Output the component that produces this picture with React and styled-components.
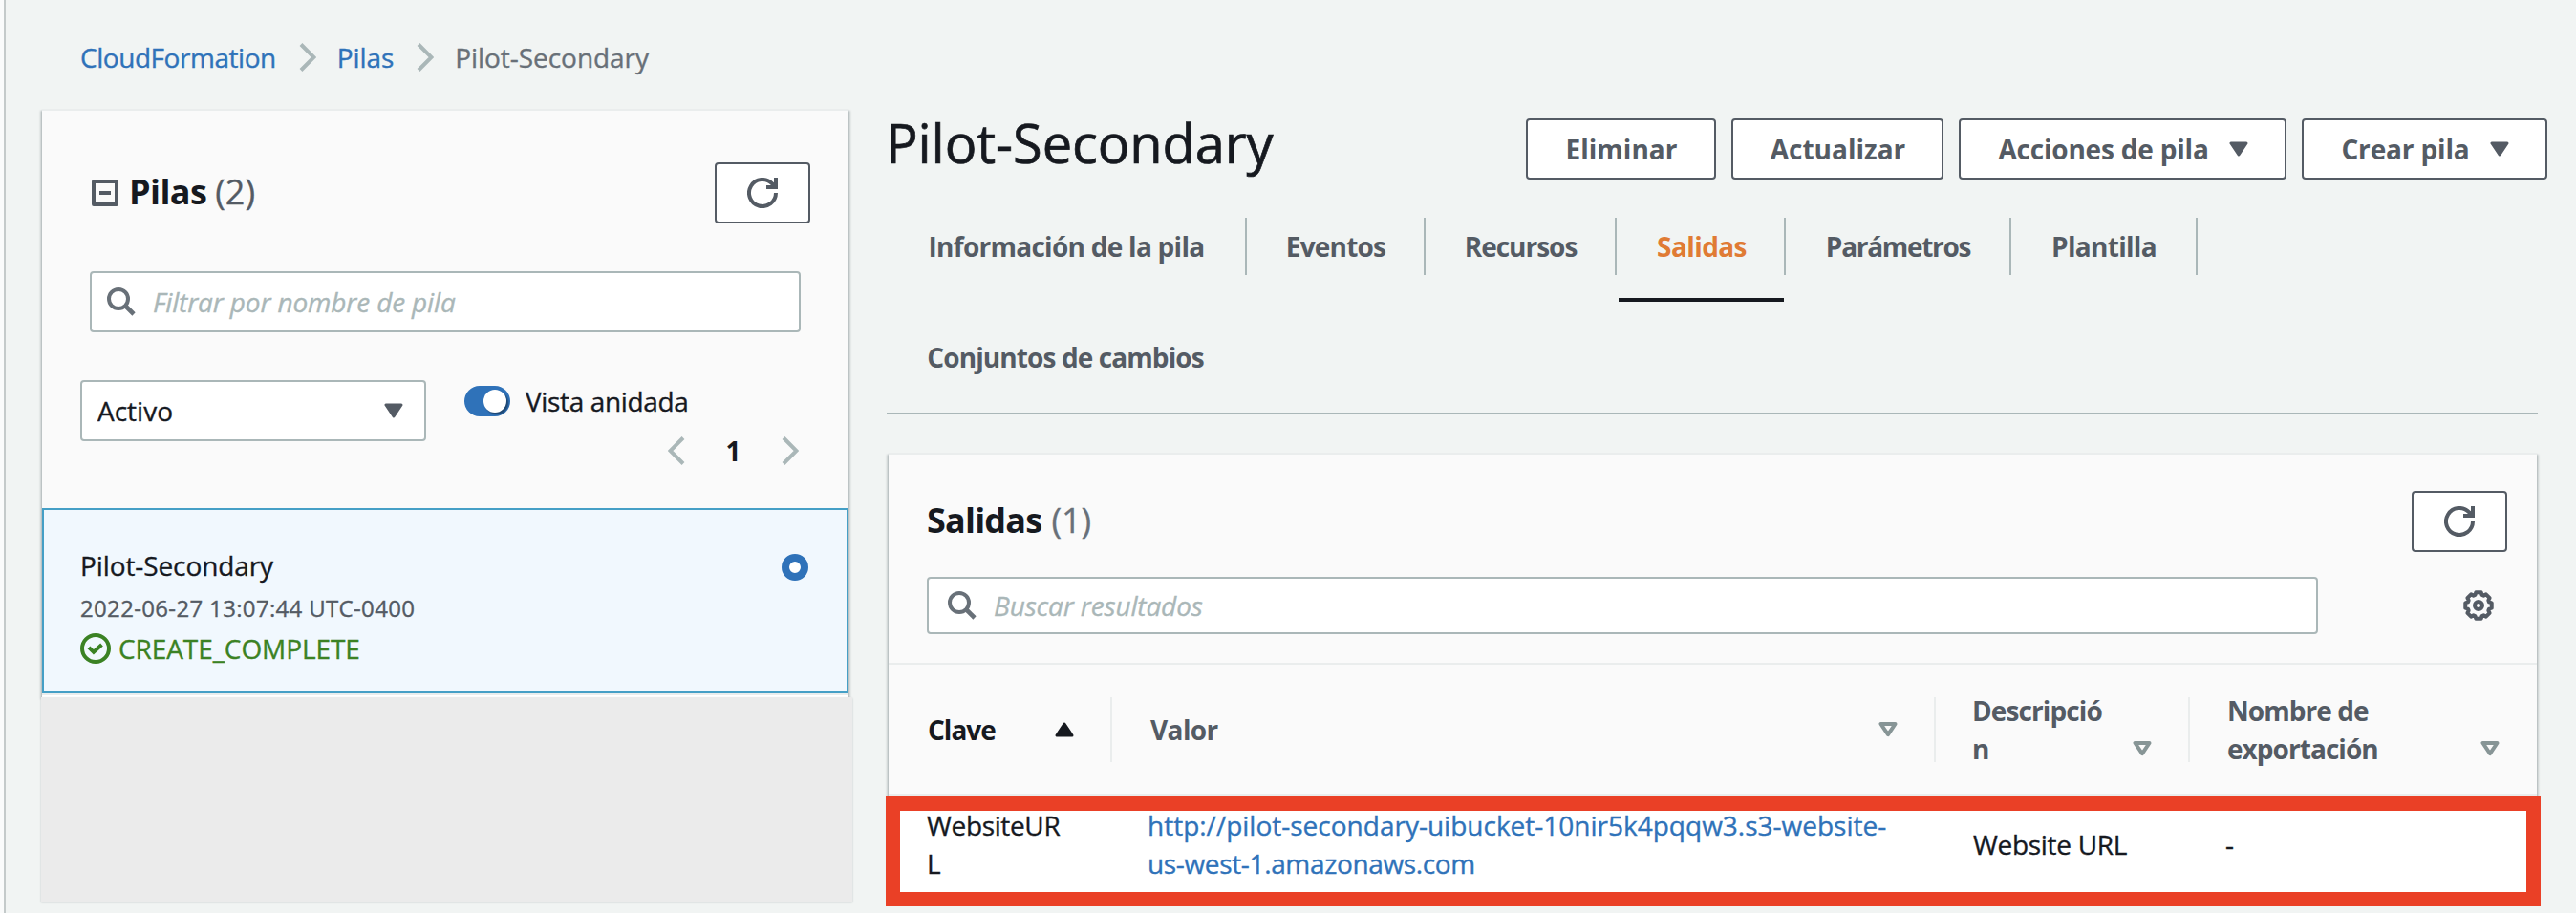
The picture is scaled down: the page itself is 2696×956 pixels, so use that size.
import React from 'react';
import styled, { createGlobalStyle, css } from 'styled-components';

const color = {
  page: '#f1f4f3',
  panel: '#fafafa',
  ink: '#16191f',
  slate: '#545b64',
  grey: '#687078',
  line: '#aab7b8',
  hair: '#eaeded',
  link: '#2f72b9',
  orange: '#e07b34',
  green: '#3b8224',
  red: '#ea4026',
};

const GlobalStyle = createGlobalStyle`
  * { box-sizing: border-box; }
  body {
    margin: 0;
    background: ${color.page};
    color: ${color.ink};
    font: 400 28px/40px "Open Sans", "Noto Sans", sans-serif;
    -webkit-text-stroke: 0.35px currentColor;
    overflow: hidden;
  }
`;

const boldText = css`
  font-weight: 700;
  -webkit-text-stroke: 0;
`;

const panelShadow = css`
  border-top: 2px solid ${color.hair};
  background: ${color.panel};
  box-shadow: 0 2px 2px rgba(0, 28, 36, 0.3), 2px 2px 2px rgba(0, 28, 36, 0.15),
    -2px 2px 2px rgba(0, 28, 36, 0.15);
`;

const Shell = styled.div`
  display: flex;
  width: 2696px;
  height: 956px;
`;

const Rail = styled.div`
  width: 6px;
  background: #fafbfb;
  border-right: 2px solid #c4caca;
`;

const Page = styled.div`
  flex: 1;
  padding: 40px 0 0 38px;
`;

const Breadcrumbs = styled.nav`
  display: flex;
  align-items: center;
  height: 40px;
  margin: 0 0 34px 40px;
`;

const Crumb = styled.span`
  color: ${(p) => (p.$current ? color.grey : color.link)};
  letter-spacing: ${(p) => p.$track || 0}px;
  white-space: nowrap;
`;

const CrumbSeparator = styled.span`
  display: flex;
  margin: 0 22px 0 24px;
`;

const Columns = styled.div`
  display: flex;
  align-items: flex-start;
`;

const Sidebar = styled.aside`
  width: 848px;
`;

const StackPanel = styled.section`
  ${panelShadow}
  width: 844px;
  height: 616px;
`;

const StackHeader = styled.header`
  display: flex;
  align-items: center;
  height: 118px;
  padding: 54px 40px 0 52px;
`;

const Heading = styled.h2`
  ${boldText}
  margin: 0 auto 0 ${(p) => p.$left || 0}px;
  padding-bottom: 2px;
  font-size: 36px;
  line-height: 62px;
  letter-spacing: ${(p) => p.$track}px;
  white-space: nowrap;
`;

const Count = styled.span`
  margin-left: ${(p) => p.$gap}px;
  font-weight: 400;
  -webkit-text-stroke: 0.35px currentColor;
  letter-spacing: 0;
  color: ${(p) => p.$tone};
`;

const IconButton = styled.button`
  display: flex;
  align-items: center;
  justify-content: center;
  width: 100px;
  height: 64px;
  padding: 0;
  background: #fff;
  border: 2px solid ${color.slate};
  border-radius: 4px;
`;

const SearchBox = styled.div`
  display: flex;
  align-items: center;
  width: ${(p) => p.$width}px;
  height: ${(p) => p.$height}px;
  padding-left: ${(p) => p.$inset}px;
  background: #fff;
  border: 2px solid ${color.line};
  border-radius: 4px;
`;

const Placeholder = styled.span`
  margin-left: 18px;
  font-style: italic;
  color: ${color.line};
  letter-spacing: -0.15px;
`;

const StackSearch = styled.div`
  padding: 50px 0 50px 50px;
`;

const FilterRow = styled.div`
  display: flex;
  height: 134px;
  padding: 0 52px 0 40px;
`;

const Select = styled.div`
  display: flex;
  align-items: center;
  justify-content: space-between;
  width: 362px;
  height: 64px;
  padding: 0 22px 0 16px;
  background: #fff;
  border: 2px solid ${color.line};
  border-radius: 4px;
`;

const FilterSide = styled.div`
  flex: 1;
  display: flex;
  flex-direction: column;
  padding: 6px 0 0 40px;
`;

const ToggleRow = styled.div`
  display: flex;
  align-items: center;
  gap: 16px;
  height: 32px;
  letter-spacing: -0.35px;
`;

const Toggle = styled.span`
  display: flex;
  justify-content: flex-end;
  align-items: center;
  width: 48px;
  height: 32px;
  padding-right: 4px;
  border-radius: 16px;
  background: ${color.link};
`;

const Knob = styled.span`
  width: 24px;
  height: 24px;
  border-radius: 50%;
  background: #fff;
  box-shadow: 2px 2px 2px rgba(0, 0, 0, 0.4);
`;

const Pager = styled.div`
  display: flex;
  justify-content: flex-end;
  align-items: center;
  height: 30px;
  margin-top: 21px;
  line-height: 30px;
`;

const PageNumber = styled.b`
  ${boldText}
  width: 101px;
  text-align: center;
`;

const StackCard = styled.article`
  display: flex;
  justify-content: space-between;
  height: 194px;
  padding: 38px 40px 0 38px;
  background: #f1f8fe;
  border: 2px solid #459fc6;
`;

const StackName = styled.div`
  letter-spacing: -0.1px;
`;

const CardFoot = styled.div`
  height: 4px;
  background: #fff;
  border-top: 2px solid ${color.hair};
`;

const StackDate = styled.div`
  margin-top: 7px;
  font-size: 24px;
  line-height: 36px;
  letter-spacing: 0.33px;
  color: ${color.slate};
`;

const StackStatus = styled.div`
  display: flex;
  align-items: center;
  gap: 8px;
  height: 32px;
  margin-top: 8px;
  line-height: 30px;
  letter-spacing: -0.08px;
  color: ${color.green};
`;

const Radio = styled.span`
  width: 28px;
  height: 28px;
  margin-top: 8px;
  border: 8px solid ${color.link};
  border-radius: 50%;
  background: #fff;
`;

const EmptyArea = styled.div`
  position: relative;
  height: 214px;
  margin-left: -1px;
  background: #ebebeb;
  box-shadow: 0 1px 2px rgba(0, 28, 36, 0.2);
`;

const Detail = styled.main`
  width: 1736px;
  margin-left: 38px;
`;

const TitleRow = styled.div`
  display: flex;
  align-items: flex-start;
  justify-content: space-between;
  height: 114px;
`;

const Title = styled.h1`
  margin: 3px 0 0 -3px;
  font-size: 56px;
  line-height: 64px;
  font-weight: 400;
  letter-spacing: -0.1px;
  -webkit-text-stroke: 0.7px currentColor;
  white-space: nowrap;
`;

const Actions = styled.div`
  display: flex;
  gap: 16px;
  padding-top: 10px;
`;

const ActionButton = styled.button`
  ${boldText}
  display: flex;
  align-items: center;
  justify-content: center;
  gap: 21px;
  width: ${(p) => p.$width}px;
  height: 64px;
  padding: 0 0 0 1px;
  background: #fff;
  border: 2px solid ${color.slate};
  border-radius: 4px;
  color: ${color.slate};
  font-family: inherit;
  font-size: 28px;
  line-height: 40px;
  letter-spacing: ${(p) => p.$track || 0}px;
  white-space: nowrap;
`;

const Tabs = styled.div`
  display: flex;
  flex-wrap: wrap;
  width: 1728px;
  height: 206px;
  margin-left: -2px;
  border-bottom: 2px solid ${color.line};
`;

const Tab = styled.div`
  ${boldText}
  width: ${(p) => p.$width}px;
  height: 88px;
  margin-bottom: 28px;
  color: ${(p) => (p.$active ? color.orange : color.slate)};
  text-align: center;
  letter-spacing: ${(p) => p.$track}px;
  border-bottom: ${(p) => (p.$active ? `4px solid ${color.ink}` : '0')};
`;

const TabLabel = styled.div`
  height: 60px;
  line-height: 61px;
  padding-left: 1px;
  white-space: nowrap;
`;

const TabDivider = styled.div`
  width: 2px;
  height: 60px;
  margin-right: ${(p) => p.$after || 0}px;
  background: ${color.line};
`;

const OutputPanel = styled.section`
  ${panelShadow}
  width: 1725px;
  height: 460px;
  margin-top: 40px;
`;

const OutputHeader = styled.header`
  display: flex;
  align-items: center;
  height: 102px;
  padding: 38px 31px 0 40px;
`;

const OutputTools = styled.div`
  display: flex;
  justify-content: space-between;
  align-items: center;
  height: 118px;
  padding: 26px 45px 30px 40px;
  border-bottom: 2px solid ${color.hair};
`;

const TableRow = styled.div`
  display: grid;
  grid-template-columns: 234px 862px 266px 1fr;
  align-items: center;
`;

const TableHead = styled(TableRow)`
  ${boldText}
  height: 137px;
  color: ${color.slate};
  border-bottom: 2px solid ${color.hair};
`;

const HeadCell = styled.div`
  display: flex;
  justify-content: space-between;
  align-items: ${(p) => (p.$tall ? 'flex-end' : 'center')};
  height: 68px;
  padding: 0 ${(p) => p.$right || 38}px 0 ${(p) => p.$left}px;
  color: ${(p) => (p.$sorted ? color.ink : 'inherit')};
  border-right: ${(p) => (p.$last ? '0' : `2px solid ${color.hair}`)};
  letter-spacing: ${(p) => p.$track || 0}px;
`;

const HeadText = styled.div`
  margin: ${(p) => (p.$tall ? '-6px 0' : '0')};
  white-space: nowrap;
`;

const SortSlot = styled.span`
  display: flex;
  margin-bottom: ${(p) => (p.$tall ? 6 : 0)}px;
`;

const TableBody = styled(TableRow)`
  height: 102px;
  background: #fff;
`;

const Cell = styled.div`
  padding-left: ${(p) => p.$left}px;
  letter-spacing: ${(p) => p.$track || 0}px;
`;

const OutputLink = styled.a`
  color: ${color.link};
`;

const LinkLine = styled.span`
  display: block;
  letter-spacing: ${(p) => p.$track || 0}px;
  white-space: nowrap;
`;

const BodyWrap = styled.div`
  position: relative;
`;

/* Highlight frame drawn over the output row */
const Highlight = styled.div`
  position: absolute;
  left: -3px;
  top: 1px;
  width: 1732px;
  height: 115px;
  border: 15px solid ${color.red};
`;

const Chevron = ({ left }) => (
  <svg width="18" height="30" viewBox="0 0 18 30" fill="none" stroke={color.line} strokeWidth="4">
    <path d={left ? 'M16 1.5 2.5 15 16 28.5' : 'M2 1.5 15.5 15 2 28.5'} />
  </svg>
);

const Refresh = () => (
  <svg width="32" height="32" viewBox="0 0 32 32" fill="none" stroke={color.slate} strokeWidth="4">
    <path d="M30 16A14 14 0 1 1 26.2 6.4L28 8.6" />
    <path d="M30 0V10H20" />
  </svg>
);

const Search = () => (
  <svg width="30" height="30" viewBox="0 0 30 30" fill="none" stroke={color.grey} strokeWidth="4">
    <circle cx="12" cy="12" r="10" />
    <path d="M19 19 28 28" strokeWidth="4.6" />
  </svg>
);

const Collapse = () => (
  <svg width="28" height="28" viewBox="0 0 28 28" fill="none" stroke={color.slate} strokeWidth="4" strokeLinejoin="round">
    <path d="M2 2H26V26H2ZM8 14H20" />
  </svg>
);

const Check = () => (
  <svg width="32" height="32" viewBox="0 0 32 32" fill="none" stroke={color.green} strokeWidth="4">
    <circle cx="16" cy="16" r="14" />
    <path d="M9 14.8 14 19.8 22.5 12" />
  </svg>
);

const Caret = () => (
  <svg width="20" height="16" viewBox="0 0 20 16">
    <path d="M2 2H18L10 14Z" fill={color.slate} stroke={color.slate} strokeWidth="3" strokeLinejoin="round" />
  </svg>
);

const SortUp = () => (
  <svg width="20" height="16" viewBox="0 0 20 16">
    <path d="M2 14H18L10 2Z" fill={color.ink} stroke={color.ink} strokeWidth="3" strokeLinejoin="round" />
  </svg>
);

const SortDown = () => (
  <svg width="20" height="16" viewBox="0 0 20 16">
    <path d="M2.5 2H17.5L10 13.2Z" fill="none" stroke="#879596" strokeWidth="4" strokeLinejoin="round" />
  </svg>
);

const gearPath = Array.from({ length: 8 }, (_, i) =>
  [[-11, 14], [11, 14], [18, 11.6], [27, 11.6]]
    .map(([a, r]) => {
      const t = ((i * 45 + a) * Math.PI) / 180;
      return `${(16 + r * Math.cos(t)).toFixed(2)} ${(16 + r * Math.sin(t)).toFixed(2)}`;
    })
    .join('L')
).join('L');

const Gear = () => (
  <svg width="32" height="32" viewBox="0 0 32 32" fill="none" stroke={color.slate} strokeWidth="4" strokeLinejoin="round">
    <path d={`M${gearPath}Z`} />
    <circle cx="16" cy="16" r="4" />
  </svg>
);

export default function App() {
  return (
    <>
      <GlobalStyle />
      <Shell>
        <Rail />
        <Page>
          <Breadcrumbs>
            <Crumb $track={-0.45}>CloudFormation</Crumb>
            <CrumbSeparator><Chevron /></CrumbSeparator>
            <Crumb $track={-0.1}>Pilas</Crumb>
            <CrumbSeparator><Chevron /></CrumbSeparator>
            <Crumb $current $track={-0.05}>Pilot-Secondary</Crumb>
          </Breadcrumbs>
          <Columns>
            <Sidebar>
              <StackPanel>
                <StackHeader>
                  <Collapse />
                  <Heading $left={11} $track={-0.6}>
                    Pilas<Count $gap={9} $tone={color.slate}>(2)</Count>
                  </Heading>
                  <IconButton><Refresh /></IconButton>
                </StackHeader>
                <StackSearch>
                  <SearchBox $width={744} $height={64} $inset={16}>
                    <Search />
                    <Placeholder>Filtrar por nombre de pila</Placeholder>
                  </SearchBox>
                </StackSearch>
                <FilterRow>
                  <Select>Activo<Caret /></Select>
                  <FilterSide>
                    <ToggleRow><Toggle><Knob /></Toggle>Vista anidada</ToggleRow>
                    <Pager>
                      <Chevron left /><PageNumber>1</PageNumber><Chevron />
                    </Pager>
                  </FilterSide>
                </FilterRow>
                <StackCard>
                  <div>
                    <StackName>Pilot-Secondary</StackName>
                    <StackDate>2022-06-27 13:07:44 UTC-0400</StackDate>
                    <StackStatus><Check />CREATE_COMPLETE</StackStatus>
                  </div>
                  <Radio />
                </StackCard>
                <CardFoot />
              </StackPanel>
              <EmptyArea />
            </Sidebar>
            <Detail>
              <TitleRow>
                <Title>Pilot-Secondary</Title>
                <Actions>
                  <ActionButton $width={199}>Eliminar</ActionButton>
                  <ActionButton $width={222}>Actualizar</ActionButton>
                  <ActionButton $width={343} $track={-0.2}>Acciones de pila<Caret /></ActionButton>
                  <ActionButton $width={257} $track={-0.15}>Crear pila<Caret /></ActionButton>
                </Actions>
              </TitleRow>
              <Tabs>
                <Tab $width={375} $track={-0.73}><TabLabel>Información de la pila</TabLabel></Tab>
                <TabDivider />
                <Tab $width={185} $track={-0.8}><TabLabel>Eventos</TabLabel></Tab>
                <TabDivider />
                <Tab $width={198} $track={-1}><TabLabel>Recursos</TabLabel></Tab>
                <TabDivider $after={2} />
                <Tab $width={173} $track={-0.6} $active><TabLabel>Salidas</TabLabel></Tab>
                <TabDivider />
                <Tab $width={234} $track={-1.3}><TabLabel>Parámetros</TabLabel></Tab>
                <TabDivider />
                <Tab $width={193} $track={-0.7}><TabLabel>Plantilla</TabLabel></Tab>
                <TabDivider $after={300} />
                <Tab $width={373} $track={-0.9}><TabLabel>Conjuntos de cambios</TabLabel></Tab>
              </Tabs>
              <OutputPanel>
                <OutputHeader>
                  <Heading $track={-0.8}>
                    Salidas<Count $gap={10} $tone={color.grey}>(1)</Count>
                  </Heading>
                  <IconButton><Refresh /></IconButton>
                </OutputHeader>
                <OutputTools>
                  <SearchBox $width={1456} $height={60} $inset={20}>
                    <Search />
                    <Placeholder>Buscar resultados</Placeholder>
                  </SearchBox>
                  <Gear />
                </OutputTools>
                <TableHead>
                  <HeadCell $left={41} $track={-1} $sorted>
                    <HeadText>Clave</HeadText><SortSlot><SortUp /></SortSlot>
                  </HeadCell>
                  <HeadCell $left={40} $track={-0.6}>
                    <HeadText>Valor</HeadText><SortSlot><SortDown /></SortSlot>
                  </HeadCell>
                  <HeadCell $left={38} $track={-0.9} $tall>
                    <HeadText $tall>Descripció<br />n</HeadText><SortSlot $tall><SortDown /></SortSlot>
                  </HeadCell>
                  <HeadCell $left={39} $right={39} $track={-0.95} $tall $last>
                    <HeadText $tall>Nombre de<br />exportación</HeadText><SortSlot $tall><SortDown /></SortSlot>
                  </HeadCell>
                </TableHead>
                <BodyWrap>
                  <TableBody>
                    <Cell $left={40} $track={-0.35}>WebsiteUR<br />L</Cell>
                    <Cell $left={37}>
                      <OutputLink>
                        <LinkLine>http://pilot-secondary-uibucket-10nir5k4pqqw3.s3-website-</LinkLine>
                        <LinkLine $track={-0.35}>us-west-1.amazonaws.com</LinkLine>
                      </OutputLink>
                    </Cell>
                    <Cell $left={39} $track={-0.3}>Website URL</Cell>
                    <Cell $left={37}>-</Cell>
                  </TableBody>
                  <Highlight />
                </BodyWrap>
              </OutputPanel>
            </Detail>
          </Columns>
        </Page>
      </Shell>
    </>
  );
}
